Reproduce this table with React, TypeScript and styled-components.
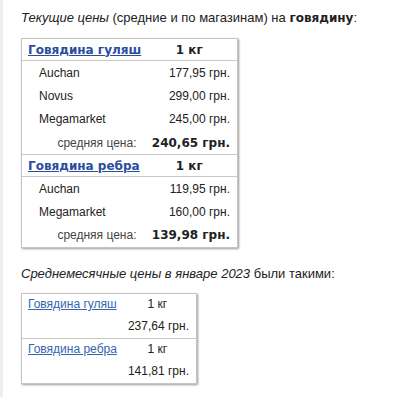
import styled, { createGlobalStyle } from "styled-components";

const GlobalStyle = createGlobalStyle`
  body {
    margin: 0;
    background: #fff;
    font-family: "Liberation Sans", Arial, sans-serif;
    color: #222;
  }
`

const Page = styled.div`
  min-height: 397px;
  border-left: 3px solid #eeeeee;
  padding: 9px 0 0 18px;
  box-sizing: border-box;
`

const Lead = styled.p<{ $top?: number }>`
  margin: ${p => p.$top ?? 0}px 0 0 0;
  font-size: 13px;
  line-height: 18px;
  color: #222;
  em { font-style: italic; }
  strong {
    font-family: "DejaVu Sans", Verdana, sans-serif;
    font-weight: bold;
    font-size: 12px;
  }
`

const PriceTable = styled.table<{ $width: number; $top: number }>`
  width: ${p => p.$width}px;
  margin-top: ${p => p.$top}px;
  border-collapse: collapse;
  border: 1px solid #c4c4c4;
  box-shadow: 1px 1px 2px #9a9a9a;
  table-layout: fixed;
  font-size: 12px;
`

const HeadRow = styled.tr`
  height: 22px;
  border-bottom: 1px solid #c8c8c8;
`

const Row = styled.tr<{ $h?: number; $last?: boolean }>`
  height: ${p => p.$h ?? 23}px;
  border-bottom: ${p => (p.$last ? "1px solid #c8c8c8" : "none")};
`

const ProductLink = styled.a<{ $bold?: boolean }>`
  color: ${p => (p.$bold ? "#2a4c9c" : "#3466b0")};
  text-decoration: underline;
  font-family: ${p => (p.$bold ? '"DejaVu Sans", Verdana, sans-serif' : '"Liberation Sans", Arial, sans-serif')};
  font-weight: ${p => (p.$bold ? "bold" : "normal")};
  font-size: 12px;
  cursor: pointer;
`

const Cell = styled.td<{ $align?: string; $pl?: number; $pr?: number; $bold?: boolean; $muted?: boolean }>`
  padding: 0 ${p => p.$pr ?? 6}px 0 ${p => p.$pl ?? 6}px;
  text-align: ${p => p.$align ?? "left"};
  vertical-align: middle;
  white-space: nowrap;
  color: ${p => (p.$muted ? "#444" : "#222")};
  font-family: ${p => (p.$bold ? '"DejaVu Sans", Verdana, sans-serif' : "inherit")};
  font-weight: ${p => (p.$bold ? "bold" : "normal")};
  font-size: 12px;
`

type Shop = { name: string; price: string };
type Group = { title: string; shops: Shop[]; avg: string };

const current: Group[] = [
  {
    title: "Говядина гуляш",
    shops: [
      { name: "Auchan", price: "177,95 грн." },
      { name: "Novus", price: "299,00 грн." },
      { name: "Megamarket", price: "245,00 грн." },
    ],
    avg: "240,65 грн.",
  },
  {
    title: "Говядина ребра",
    shops: [
      { name: "Auchan", price: "119,95 грн." },
      { name: "Megamarket", price: "160,00 грн." },
    ],
    avg: "139,98 грн.",
  },
];

const monthly = [
  { title: "Говядина гуляш", price: "237,64 грн." },
  { title: "Говядина ребра", price: "141,81 грн." },
];

const CurrentTable = () => (
  <PriceTable $width={216} $top={11}>
    <colgroup>
      <col style={{ width: 120 }} />
      <col style={{ width: 96 }} />
    </colgroup>
    {current.map(g => (
      <tbody key={g.title}>
        <HeadRow>
          <Cell><ProductLink $bold>{g.title}</ProductLink></Cell>
          <Cell $align="center" $bold>1 кг</Cell>
        </HeadRow>
        {g.shops.map(s => (
          <Row key={s.name} $h={23.5}>
            <Cell $pl={17}>{s.name}</Cell>
            <Cell $align="right" $pr={7}>{s.price}</Cell>
          </Row>
        ))}
        <Row $h={23.5} $last={g === current[0]}>
          <Cell $align="right" $pr={5} $muted>средняя цена:</Cell>
          <Cell $align="right" $pr={7} $bold>{g.avg}</Cell>
        </Row>
      </tbody>
    ))}
  </PriceTable>
)

const MonthlyTable = () => (
  <PriceTable $width={175} $top={10}>
    <colgroup>
      <col style={{ width: 97 }} />
      <col style={{ width: 78 }} />
    </colgroup>
    {monthly.map((m, i) => (
      <tbody key={m.title}>
        <Row $h={22}>
          <Cell><ProductLink>{m.title}</ProductLink></Cell>
          <Cell $align="center">1 кг</Cell>
        </Row>
        <Row $h={23} $last={i === 0}>
          <Cell />
          <Cell $align="right" $pr={7}>{m.price}</Cell>
        </Row>
      </tbody>
    ))}
  </PriceTable>
)

export default function App() {
  return (
    <>
      <GlobalStyle />
      <Page>
        <Lead>
          <em>Текущие цены</em> (средние и по магазинам) на <strong>говядину</strong>:
        </Lead>
        <CurrentTable />
        <Lead $top={17}>
          <em>Среднемесячные цены в январе 2023</em> были такими:
        </Lead>
        <MonthlyTable />
      </Page>
    </>
  );
}
